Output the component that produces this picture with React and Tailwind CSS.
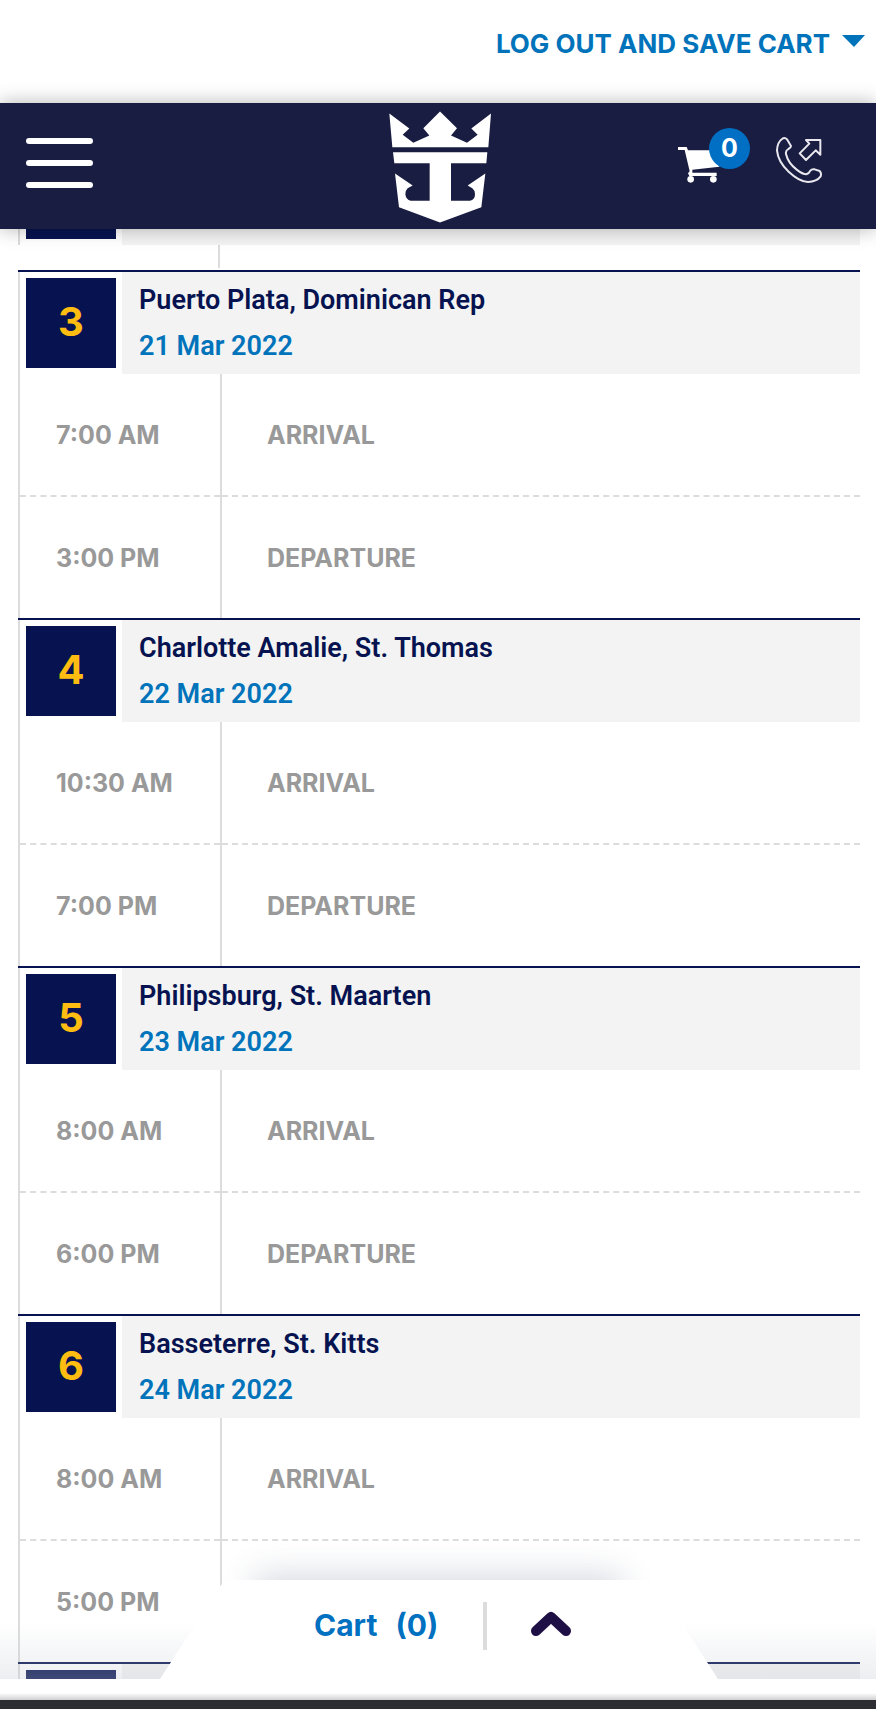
const days = [
  { number: 3, port: 'Puerto Plata, Dominican Rep', date: '21 Mar 2022', stops: [['7:00 AM', 'ARRIVAL'], ['3:00 PM', 'DEPARTURE']] },
  { number: 4, port: 'Charlotte Amalie, St. Thomas', date: '22 Mar 2022', stops: [['10:30 AM', 'ARRIVAL'], ['7:00 PM', 'DEPARTURE']] },
  { number: 5, port: 'Philipsburg, St. Maarten', date: '23 Mar 2022', stops: [['8:00 AM', 'ARRIVAL'], ['6:00 PM', 'DEPARTURE']] },
  { number: 6, port: 'Basseterre, St. Kitts', date: '24 Mar 2022', stops: [['8:00 AM', 'ARRIVAL'], ['5:00 PM', '']] },
];

function CrownAnchor() {
  return (
    <svg viewBox="57 65 306 335" className="h-28 w-[102px]" fill="#fff" aria-hidden="true">
      <path d="M58 72 L118 117 L98 136 L130 160 L178 138 L160 116 L210 66 L261 116 L243 138 L291 160 L323 136 L304 117 L363 72 L355 173 H67 Z" />
      <path d="M69 188 H352 L349 221 H243 V334 H300 Q315 330 315 314 Q315 302 307 296 L293 288 L346 252 L334 353 L210 399 L87 353 L75 252 L128 288 L113 296 Q105 304 106 314 Q108 330 122 334 H179 V221 H73 Z" />
    </svg>
  );
}

function CartIcon() {
  return (
    <svg viewBox="0 0 126 111" className="h-[37px] w-[42px]" fill="#fff" aria-hidden="true">
      <path d="M0 3 H26 L30 13 H124 V62 L43 71 V80 H116 V90 H34 L30 82 L35 76 L20 12 H0 Z" />
      <circle cx="38" cy="100" r="10" />
      <circle cx="106" cy="100" r="10" />
    </svg>
  );
}

function PhoneIcon() {
  return (
    <svg viewBox="0 0 138 138" className="size-[46px]" fill="none" stroke="#e8e8ee" strokeWidth="6" strokeLinejoin="round" aria-hidden="true">
      <path d="M18 6 Q26 0 33 7 L45 27 Q45 32 37 36 Q28 41 30 51 Q36 78 62 98 Q80 112 91 112 Q99 110 103 101 Q108 95 116 97 L131 102 Q137 108 134 118 Q122 134 96 135 Q70 134 38 104 Q6 74 3 40 Q4 16 18 6 Z" />
      <path d="M90 9 H133 V53 L119 40 L90 69 L71 49 L100 20 Z" />
    </svg>
  );
}

function Topbar() {
  return (
    <div className="flex h-[103px] shrink-0 items-start justify-end bg-white pt-6 pr-[11px]">
      <button type="button" className="flex items-center gap-3 text-[26px] leading-10 font-bold text-[#0073bb]">
        LOG OUT AND SAVE CART
        <svg viewBox="0 0 23 12" className="mb-[6px] h-3 w-[23px]" fill="currentColor" aria-hidden="true">
          <path d="M0 0 H23 L12 12 Z" />
        </svg>
      </button>
    </div>
  );
}

function Header() {
  return (
    <header className="relative z-10 grid h-[126px] shrink-0 grid-cols-3 items-center bg-[#1a1d42] pt-[2px] pl-[26px] pr-[54px] shadow-[0_0_18px_rgba(0,0,0,0.3)]">
      <button type="button" aria-label="Menu" className="mb-2 flex w-[67px] flex-col gap-4">
        <span className="h-[6px] rounded-full bg-white" />
        <span className="h-[6px] rounded-full bg-white" />
        <span className="h-[6px] rounded-full bg-white" />
      </button>
      <a href="#home" aria-label="Home" className="ml-8 justify-self-center">
        <CrownAnchor />
      </a>
      <div className="mb-[14px] flex items-end justify-end gap-14">
        <button type="button" className="relative">
          <CartIcon />
          <span className="absolute -top-[18px] left-[31px] flex size-[41px] items-center justify-center rounded-full bg-[#006fc4] text-[25px] leading-none font-bold text-white">
            0
          </span>
        </button>
        <button type="button" aria-label="Call us">
          <PhoneIcon />
        </button>
      </div>
    </header>
  );
}

function Day({ number, port, date, stops }) {
  return (
    <section className="border-t-2 border-[#061350]">
      <div className="border-l-2 border-[#dcdcdc]">
        <div className="flex gap-[6px] pl-[6px]">
          <div className="mt-[6px] flex size-[90px] shrink-0 items-center justify-center bg-[#061350] pb-[2px] text-[40px] font-bold text-[#ffbd12]">
            {number}
          </div>
          <div className="h-[102px] flex-1 bg-[#f3f3f3] pt-[5px] pl-[17px] font-['Roboto',sans-serif] text-[27px] leading-[46px] font-semibold">
            <h2 className="text-[#061350]">{port}</h2>
            <p className="text-[#0073bb]">{date}</p>
          </div>
        </div>
        <table className="w-full table-fixed border-collapse text-left text-[25px] leading-9 font-bold text-[#999]">
          <tbody>
            {stops.map(([time, event]) => (
              <tr key={time} className="h-[122px] border-dashed border-[#dcdcdc] not-last:border-b-2">
                <td className="w-[201px] border-r-2 border-solid border-r-[#dcdcdc] pl-9">{time}</td>
                <td className="pl-[45px]">{event}</td>
              </tr>
            ))}
          </tbody>
        </table>
      </div>
    </section>
  );
}

function CartTab() {
  return (
    <div className="absolute inset-x-0 bottom-0 z-10">
      <div className="absolute inset-x-0 bottom-0 h-14 bg-linear-to-t from-[#c3c8d2]/30 to-transparent" />
      <div className="relative mx-auto h-[99px] w-[560px]">
        <div className="absolute inset-x-24 top-0 h-10 rounded-md shadow-[0_-4px_34px_rgba(60,75,110,0.22)]" />
        <svg viewBox="0 0 560 99" preserveAspectRatio="none" className="absolute inset-0 size-full" fill="#fff" aria-hidden="true">
          <path d="M2 99 L61 8 Q66 0 74 0 H488 Q496 0 501 8 L560 99 Z" />
        </svg>
        <button type="button" className="relative flex h-[91px] w-full items-center pl-[156px] text-[30px] font-bold text-[#0070c0]">
          <span>Cart</span>
          <span className="ml-[18px]">(0)</span>
          <span className="ml-[45px] h-12 w-1 bg-[#dcdcdc]" />
          <svg viewBox="0 0 42 26" className="ml-[43px] mb-1 h-[26px] w-[42px]" fill="none" stroke="#1e1045" strokeWidth="10" strokeLinecap="round" strokeLinejoin="round" aria-hidden="true">
            <path d="M6 20 L21 6 L36 20" />
          </svg>
        </button>
      </div>
    </div>
  );
}

export default function App() {
  return (
    <div className="flex h-screen flex-col overflow-hidden bg-white font-['Inter',sans-serif]">
      <Topbar />
      <Header />
      <div className="relative min-h-0 flex-1 overflow-hidden">
        <main className="pr-4 pl-[18px]">
          {/* tail of the previous day */}
          <div className="flex h-4 gap-[6px] border-l-2 border-[#dcdcdc] pl-[6px]">
            <div className="h-[10px] w-[90px] bg-[#061350]" />
            <div className="flex-1 bg-[#f3f3f3]" />
          </div>
          <div className="h-[25px] pl-[200px]">
            <div className="h-[23px] border-l-2 border-[#dcdcdc]" />
          </div>
          {days.map((day) => (
            <Day key={day.number} {...day} />
          ))}
          <div className="border-t-2 border-[#061350]">
            <div className="flex gap-[6px] border-l-2 border-[#dcdcdc] pl-[6px]">
              <div className="mt-[6px] size-[90px] bg-[#061350]" />
              <div className="flex-1 bg-[#f3f3f3]" />
            </div>
          </div>
        </main>
        <CartTab />
      </div>
      <footer className="shrink-0">
        <div className="h-[14px] bg-white" />
        <div className="h-[7px] bg-linear-to-b from-white to-[#d0d0d0]" />
        <div className="h-[9px] bg-[#2d2e32]" />
      </footer>
    </div>
  );
}
